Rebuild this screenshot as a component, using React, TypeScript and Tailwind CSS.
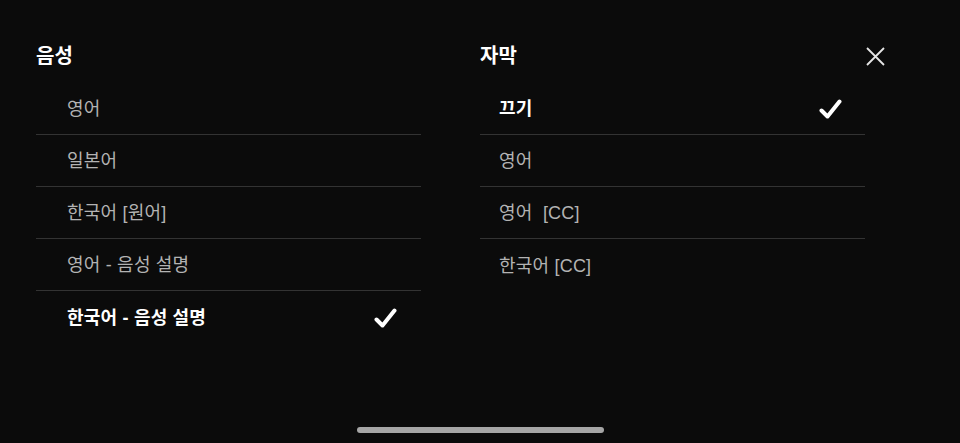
import React from 'react'

const audio = [
  { label: '영어' },
  { label: '일본어' },
  { label: '한국어 [원어]' },
  { label: '영어 - 음성 설명' },
  { label: '한국어 - 음성 설명', selected: true },
]

const subtitles = [
  { label: '끄기', selected: true },
  { label: '영어' },
  { label: '영어\u00a0 [CC]' },
  { label: '한국어 [CC]' },
]

function Check() {
  return (
    <svg width="23" height="21" viewBox="0 0 23 21" fill="none">
      <path d="M2.5 11.5 L8.5 17.5 L20.5 2.5" stroke="white" strokeWidth="4" strokeLinecap="round" strokeLinejoin="round" />
    </svg>
  )
}

function Column({ title, items, indent, checkRight }: { title: string; items: { label: string; selected?: boolean }[]; indent: string; checkRight: string }) {
  return (
    <div className="w-[385px]">
      <h2 className="h-[28px] leading-[28px] text-[20px] font-bold text-white">{title}</h2>
      <ul className="mt-[13px]">
        {items.map((it, i) => (
          <li
            key={i}
            className={`h-[52px] pt-[2px] flex items-center justify-between ${indent} ${checkRight} ${i < items.length - 1 ? 'border-b border-[#333333]' : ''}`}
          >
            <span className={`text-[18px] tracking-[0.2px] ${it.selected ? 'text-white font-bold' : 'text-[#b3b3b3]'}`}>{it.label}</span>
            {it.selected && <Check />}
          </li>
        ))}
      </ul>
    </div>
  )
}

export default function App() {
  return (
    <div
      className="h-screen w-full bg-[#0b0b0b] flex flex-col overflow-hidden"
      style={{ fontFamily: '"Liberation Sans", "Noto Sans CJK KR", sans-serif' }}
    >
      <div className="flex-1 flex pl-[36px] pt-[42px]">
        <Column title="음성" items={audio} indent="pl-[31px]" checkRight="pr-[24px]" />
        <div className="w-[59px]" />
        <Column title="자막" items={subtitles} indent="pl-[19px]" checkRight="pr-[23px]" />
        <button className="ml-px h-[28px] w-[19px] flex items-center justify-center">
          <svg width="19" height="19" viewBox="0 0 19 19" fill="none">
            <path d="M1 1 L18 18 M18 1 L1 18" stroke="#e6e6e6" strokeWidth="1.8" />
          </svg>
        </button>
      </div>
      <div className="flex justify-center mb-[10px]">
        <div className="w-[247px] h-[6px] rounded-full bg-[#a6a6a6]" />
      </div>
    </div>
  )
}
